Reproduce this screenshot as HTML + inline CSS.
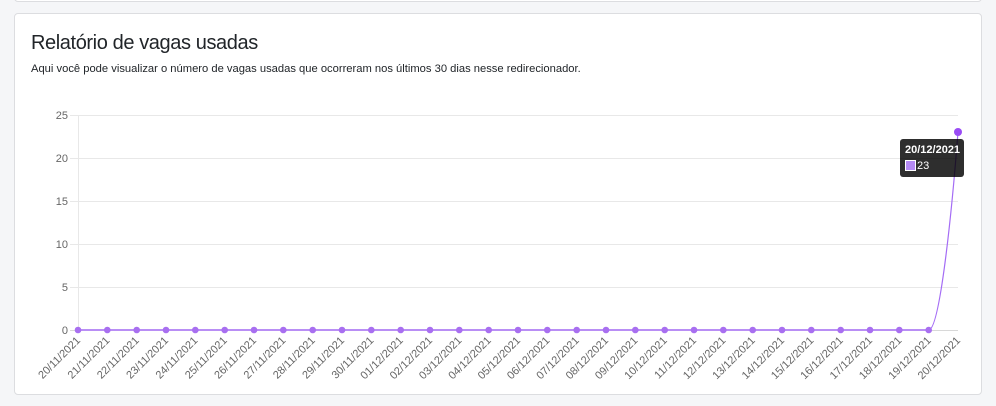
<!DOCTYPE html>
<html><head><meta charset="utf-8"><style>
body{margin:0;width:996px;height:406px;background:#f5f6f8;font-family:"Liberation Sans",Arial,sans-serif;overflow:hidden;position:relative}
.top{position:absolute;left:14px;top:-10px;width:966px;height:10px;background:#fff;border:1px solid #dcdde0;border-radius:4px}
.card{position:absolute;left:14px;top:13px;width:966px;height:380px;background:#fff;border:1px solid #dcdde0;border-radius:4px}
h1{position:absolute;left:16px;top:18px;margin:0;font-size:20px;letter-spacing:-0.4px;font-weight:400;color:#212529}
p{position:absolute;left:16px;top:49px;margin:0;font-size:11.2px;color:#212529}
svg{position:absolute;left:0;top:0}
</style></head><body>
<div class="top"></div>
<div class="card"><h1>Relatório de vagas usadas</h1><p>Aqui você pode visualizar o número de vagas usadas que ocorreram nos últimos 30 dias nesse redirecionador.</p></div>
<svg width="996" height="406" font-family="Liberation Sans,Arial,sans-serif">
<g stroke="#e8e8e8" stroke-width="1">
<line x1="70" y1="115.5" x2="958" y2="115.5"/><line x1="70" y1="158.5" x2="958" y2="158.5"/><line x1="70" y1="201.5" x2="958" y2="201.5"/><line x1="70" y1="244.5" x2="958" y2="244.5"/><line x1="70" y1="287.5" x2="958" y2="287.5"/><line x1="70" y1="330.5" x2="958" y2="330.5" stroke="#d8d8d8"/><line x1="78.5" y1="115" x2="78.5" y2="330"/>
</g>
<g font-size="11" fill="#666" text-anchor="end">
<text x="68" y="119">25</text><text x="68" y="162">20</text><text x="68" y="205">15</text><text x="68" y="248">10</text><text x="68" y="291">5</text><text x="68" y="334">0</text>
</g>
<line x1="78" y1="330" x2="929" y2="330" stroke="#b98ef5" stroke-width="2"/>
<path d="M928.7,330 C940,330 952,210 958,132" fill="none" stroke="#a46cf5" stroke-width="1.2"/>
<g fill="#a86ff0">
<circle cx="78" cy="330" r="3.3"/><circle cx="107.3" cy="330" r="3.3"/><circle cx="136.7" cy="330" r="3.3"/><circle cx="166" cy="330" r="3.3"/><circle cx="195.3" cy="330" r="3.3"/><circle cx="224.7" cy="330" r="3.3"/><circle cx="254" cy="330" r="3.3"/><circle cx="283.3" cy="330" r="3.3"/><circle cx="312.7" cy="330" r="3.3"/><circle cx="342" cy="330" r="3.3"/><circle cx="371.3" cy="330" r="3.3"/><circle cx="400.7" cy="330" r="3.3"/><circle cx="430" cy="330" r="3.3"/><circle cx="459.3" cy="330" r="3.3"/><circle cx="488.7" cy="330" r="3.3"/><circle cx="518" cy="330" r="3.3"/><circle cx="547.3" cy="330" r="3.3"/><circle cx="576.7" cy="330" r="3.3"/><circle cx="606" cy="330" r="3.3"/><circle cx="635.3" cy="330" r="3.3"/><circle cx="664.7" cy="330" r="3.3"/><circle cx="694" cy="330" r="3.3"/><circle cx="723.3" cy="330" r="3.3"/><circle cx="752.7" cy="330" r="3.3"/><circle cx="782" cy="330" r="3.3"/><circle cx="811.3" cy="330" r="3.3"/><circle cx="840.7" cy="330" r="3.3"/><circle cx="870" cy="330" r="3.3"/><circle cx="899.3" cy="330" r="3.3"/><circle cx="928.7" cy="330" r="3.3"/>
<circle cx="958" cy="132" r="4" fill="#9a4cf5"/>
</g>
<g font-size="11" fill="#666" text-anchor="end">
<text transform="translate(81,341) rotate(-45)">20/11/2021</text>
<text transform="translate(110.3,341) rotate(-45)">21/11/2021</text>
<text transform="translate(139.7,341) rotate(-45)">22/11/2021</text>
<text transform="translate(169,341) rotate(-45)">23/11/2021</text>
<text transform="translate(198.3,341) rotate(-45)">24/11/2021</text>
<text transform="translate(227.7,341) rotate(-45)">25/11/2021</text>
<text transform="translate(257,341) rotate(-45)">26/11/2021</text>
<text transform="translate(286.3,341) rotate(-45)">27/11/2021</text>
<text transform="translate(315.7,341) rotate(-45)">28/11/2021</text>
<text transform="translate(345,341) rotate(-45)">29/11/2021</text>
<text transform="translate(374.3,341) rotate(-45)">30/11/2021</text>
<text transform="translate(403.7,341) rotate(-45)">01/12/2021</text>
<text transform="translate(433,341) rotate(-45)">02/12/2021</text>
<text transform="translate(462.3,341) rotate(-45)">03/12/2021</text>
<text transform="translate(491.7,341) rotate(-45)">04/12/2021</text>
<text transform="translate(521,341) rotate(-45)">05/12/2021</text>
<text transform="translate(550.3,341) rotate(-45)">06/12/2021</text>
<text transform="translate(579.7,341) rotate(-45)">07/12/2021</text>
<text transform="translate(609,341) rotate(-45)">08/12/2021</text>
<text transform="translate(638.3,341) rotate(-45)">09/12/2021</text>
<text transform="translate(667.7,341) rotate(-45)">10/12/2021</text>
<text transform="translate(697,341) rotate(-45)">11/12/2021</text>
<text transform="translate(726.3,341) rotate(-45)">12/12/2021</text>
<text transform="translate(755.7,341) rotate(-45)">13/12/2021</text>
<text transform="translate(785,341) rotate(-45)">14/12/2021</text>
<text transform="translate(814.3,341) rotate(-45)">15/12/2021</text>
<text transform="translate(843.7,341) rotate(-45)">16/12/2021</text>
<text transform="translate(873,341) rotate(-45)">17/12/2021</text>
<text transform="translate(902.3,341) rotate(-45)">18/12/2021</text>
<text transform="translate(931.7,341) rotate(-45)">19/12/2021</text>
<text transform="translate(961,341) rotate(-45)">20/12/2021</text>
</g>
<rect x="900" y="139" width="64" height="38" rx="3" fill="rgba(0,0,0,0.82)"/>
<text x="905" y="153" font-size="11" font-weight="bold" fill="#fff">20/12/2021</text>
<rect x="905.5" y="160.5" width="10" height="10" fill="#b58af5" stroke="#fff" stroke-width="1"/>
<text x="917" y="169" font-size="11" fill="#fff">23</text>
</svg>
</body></html>
